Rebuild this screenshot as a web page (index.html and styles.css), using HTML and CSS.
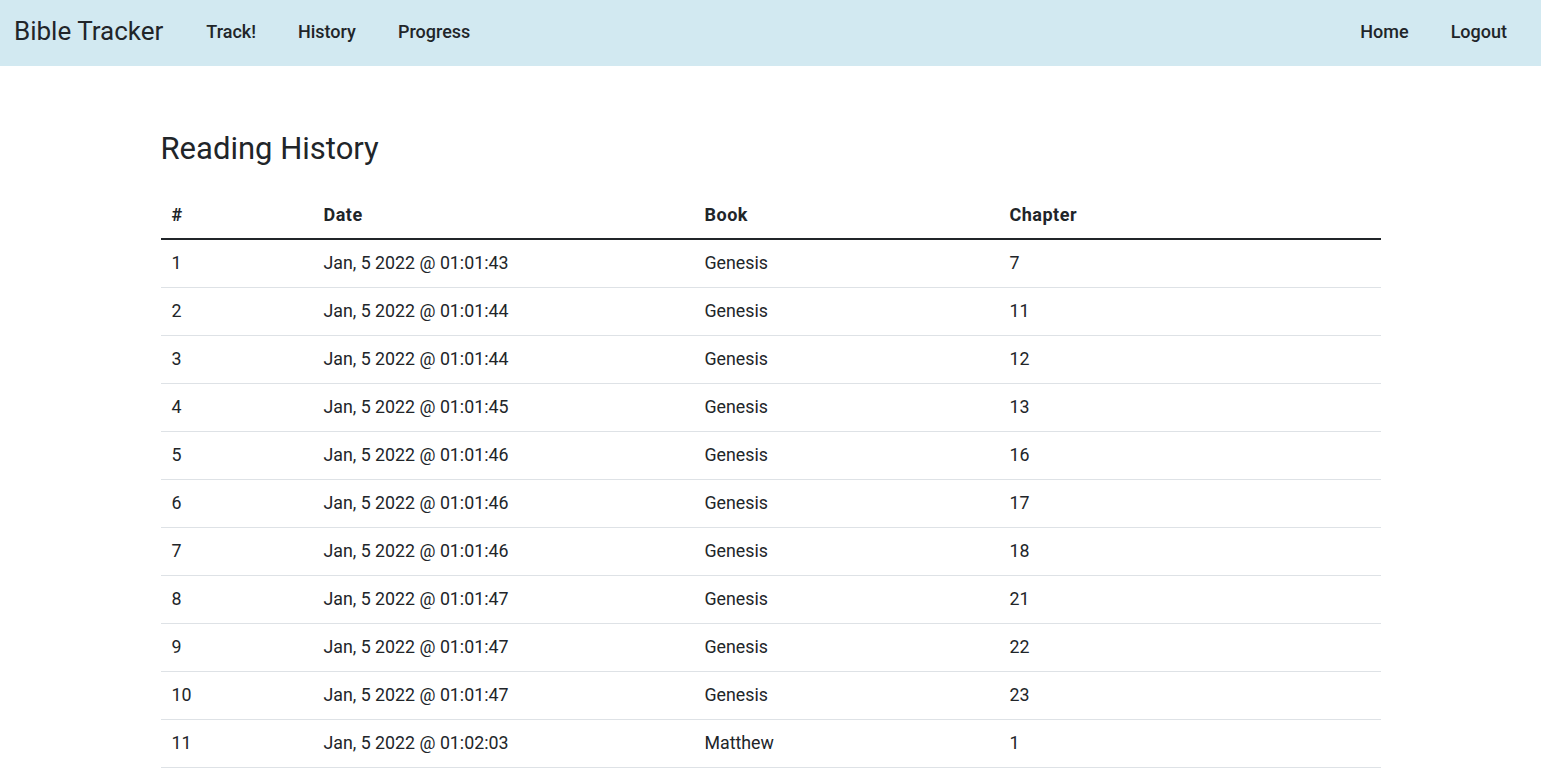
FILE: index.html
```html
<!DOCTYPE html>
<html lang="en">
<head>
<meta charset="utf-8">
<title>Bible Tracker - History</title>
<link rel="stylesheet" href="styles.css">
</head>
<body>
<nav class="navbar">
  <a class="brand" href="#">Bible Tracker</a>
  <ul class="nav-left">
    <li><a href="#">Track!</a></li>
    <li><a href="#">History</a></li>
    <li><a href="#">Progress</a></li>
  </ul>
  <ul class="nav-right">
    <li><a href="#">Home</a></li>
    <li><a href="#">Logout</a></li>
  </ul>
</nav>
<main class="container">
  <h2 class="title">Reading History</h2>
  <table class="history">
    <colgroup>
      <col class="c-num"><col class="c-date"><col class="c-book"><col class="c-chap">
    </colgroup>
    <thead>
      <tr><th>#</th><th>Date</th><th>Book</th><th>Chapter</th></tr>
    </thead>
    <tbody>
      <tr><td>1</td><td>Jan, 5 2022 @ 01:01:43</td><td>Genesis</td><td>7</td></tr>
      <tr><td>2</td><td>Jan, 5 2022 @ 01:01:44</td><td>Genesis</td><td>11</td></tr>
      <tr><td>3</td><td>Jan, 5 2022 @ 01:01:44</td><td>Genesis</td><td>12</td></tr>
      <tr><td>4</td><td>Jan, 5 2022 @ 01:01:45</td><td>Genesis</td><td>13</td></tr>
      <tr><td>5</td><td>Jan, 5 2022 @ 01:01:46</td><td>Genesis</td><td>16</td></tr>
      <tr><td>6</td><td>Jan, 5 2022 @ 01:01:46</td><td>Genesis</td><td>17</td></tr>
      <tr><td>7</td><td>Jan, 5 2022 @ 01:01:46</td><td>Genesis</td><td>18</td></tr>
      <tr><td>8</td><td>Jan, 5 2022 @ 01:01:47</td><td>Genesis</td><td>21</td></tr>
      <tr><td>9</td><td>Jan, 5 2022 @ 01:01:47</td><td>Genesis</td><td>22</td></tr>
      <tr><td>10</td><td>Jan, 5 2022 @ 01:01:47</td><td>Genesis</td><td>23</td></tr>
      <tr><td>11</td><td>Jan, 5 2022 @ 01:02:03</td><td>Matthew</td><td>1</td></tr>
    </tbody>
  </table>
</main>
</body>
</html>
```

FILE: styles.css
```css
* { box-sizing: border-box; }
html, body { margin: 0; padding: 0; }
body {
  font-family: Roboto, "Liberation Sans", sans-serif;
  font-size: 18px;
  color: #212529;
  background: #fff;
}
a { text-decoration: none; color: inherit; }
ul { list-style: none; margin: 0; padding: 0; }

.navbar {
  display: flex;
  align-items: center;
  height: 66px;
  background: #d2e9f1;
  padding: 0 14px 4px;
}
.brand {
  font-size: 26px;
  color: #212529;
  margin-right: 43px;
}
.nav-left, .nav-right { display: flex; }
.nav-right { margin-left: auto; }
.nav-left a, .nav-right a {
  display: block;
  padding: 8px 0;
  font-size: 18px;
  font-weight: 500;
  color: #212529;
}
.nav-left li { margin-right: 42px; }
.nav-right li { margin-left: 42px; }
.nav-right li:last-child { margin-right: 20px; }

.container {
  width: 1220px;
  margin: 0 auto;
  padding-top: 64px;
}
.title {
  margin: 0 0 24px;
  font-size: 31px;
  font-weight: 400;
  line-height: 1.2;
  color: #212529;
}
.history {
  width: 100%;
  border-collapse: collapse;
  table-layout: fixed;
}
.c-num { width: 152px; }
.c-date { width: 381px; }
.c-book { width: 305px; }
.c-chap { width: 382px; }
.history th, .history td {
  text-align: left;
  padding: 9px 11px 11px;
  line-height: 27px;
  font-size: 17.8px;
  border-bottom: 1px solid #dee2e6;
}
.history th {
  padding: 10px 11px;
  font-size: 18px;
  font-weight: 700;
  letter-spacing: 0.5px;
  border-bottom: 2px solid #212529;
}
```
